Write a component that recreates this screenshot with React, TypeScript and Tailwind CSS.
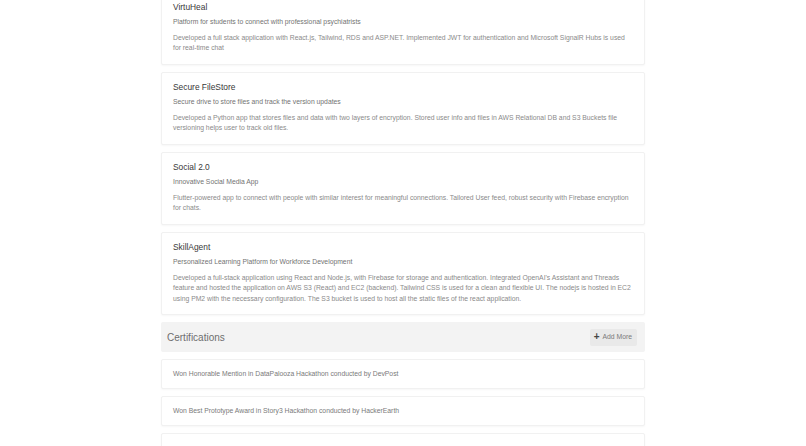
const projects = [
  {
    title: 'VirtuHeal',
    subtitle: 'Platform for students to connect with professional psychiatrists',
    description:
      'Developed a full stack application with React.js, Tailwind, RDS and ASP.NET. Implemented JWT for authentication and Microsoft SignalR Hubs is used for real-time chat',
  },
  {
    title: 'Secure FileStore',
    subtitle: 'Secure drive to store files and track the version updates',
    description:
      'Developed a Python app that stores files and data with two layers of encryption. Stored user info and files in AWS Relational DB and S3 Buckets file versioning helps user to track old files.',
  },
  {
    title: 'Social 2.0',
    subtitle: 'Innovative Social Media App',
    description:
      'Flutter-powered app to connect with people with similar interest for meaningful connections. Tailored User feed, robust security with Firebase encryption for chats.',
  },
  {
    title: 'SkillAgent',
    subtitle: 'Personalized Learning Platform for Workforce Development',
    description:
      "Developed a full-stack application using React and Node.js, with Firebase for storage and authentication. Integrated OpenAI's Assistant and Threads feature and hosted the application on AWS S3 (React) and EC2 (backend). Tailwind CSS is used for a clean and flexible UI. The nodejs is hosted in EC2 using PM2 with the necessary configuration. The S3 bucket is used to host all the static files of the react application.",
  },
];

const certifications = [
  'Won Honorable Mention in DataPalooza Hackathon conducted by DevPost',
  'Won Best Prototype Award in Story3 Hackathon conducted by HackerEarth',
  '',
];

function ProjectCard({ title, subtitle, description }: (typeof projects)[number]) {
  return (
    <div className="bg-white border border-[#f1f1f1] rounded-[2px] shadow-[0_1px_2px_rgba(0,0,0,0.035)] px-[11px] pt-[9.5px] pb-[10px]">
      <h3 className="text-[8.4px] leading-[10px] text-[#383838]">{title}</h3>
      <p className="mt-[5px] text-[6.8px] leading-[10px] text-[#737373]">{subtitle}</p>
      <p className="mt-[5.5px] text-[6.8px] leading-[10.5px] text-[#8a8a8a]">{description}</p>
    </div>
  );
}

export default function App() {
  return (
    <div className="h-[446px] bg-white overflow-hidden" style={{ fontFamily: '"Liberation Sans", Arial, sans-serif' }}>
      <div className="mx-auto w-[484px] -mt-[8.5px] flex flex-col gap-[7px]">
        {projects.map((p) => (
          <ProjectCard key={p.title} {...p} />
        ))}

        <div className="bg-[#f3f3f3] rounded-[2px] h-[30px] flex items-center justify-between pl-[6px] pr-[8px]">
          <h2 className="text-[10px] text-[#6e6e6e]">Certifications</h2>
          <button className="h-[17px] pl-[4px] pr-[5px] flex items-center gap-[3px] bg-[#e9e9e9] rounded-[2px] text-[6.8px] text-[#7a7a7a]">
            <span className="text-[10px] leading-none font-bold text-[#444]">+</span>
            Add More
          </button>
        </div>

        {certifications.map((c, i) => (
          <div
            key={i}
            className="bg-white border border-[#f1f1f1] rounded-[2px] shadow-[0_1px_2px_rgba(0,0,0,0.035)] h-[30px] flex items-center px-[11px]"
          >
            {c && <p className="text-[6.8px] text-[#7a7a7a]">{c}</p>}
          </div>
        ))}
      </div>
    </div>
  );
}
